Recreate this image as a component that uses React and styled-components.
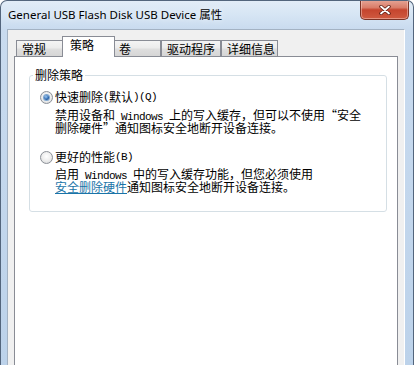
import React from "react";
import styled, { createGlobalStyle } from "styled-components";

const GlobalStyle = createGlobalStyle`
    html, body {
        margin: 0;
        padding: 0;
        background: #ffffff;
    }
    body {
        width: 414px;
        height: 365px;
        overflow: hidden;
        font-family: "Noto Sans CJK SC", "Noto Sans", sans-serif;
    }
`;

const Window = styled.div`
    width: 414px;
    height: 365px;
    box-sizing: border-box;
    border: 1px solid #53657c;
    border-bottom: none;
    border-radius: 7px 7px 0 0;
    background: linear-gradient(180deg, #e2ecf7 0, #d6e5f4 14px, #c9dbef 28px, #bcd2ea 100%);
    display: flex;
    flex-direction: column;
    overflow: hidden;
`;

const TitleBar = styled.div`
    height: 28px;
    flex: none;
    display: flex;
    align-items: flex-start;
    justify-content: space-between;
    padding: 0 4px 0 7px;
`;

const Title = styled.div`
    margin-top: 6px;
    font-family: "Noto Sans", "Noto Sans CJK SC", sans-serif;
    font-size: 11.5px;
    line-height: 16px;
    color: #000;
    text-shadow: 0 0 6px rgba(255, 255, 255, 0.9);
    white-space: nowrap;
`;

const CloseButton = styled.button`
    width: 49px;
    height: 20px;
    margin-top: -1px;
    padding: 0;
    box-sizing: border-box;
    border: 1px solid #7a3326;
    border-top: none;
    border-radius: 0 0 5px 5px;
    background: linear-gradient(180deg, #e6a697 0, #d97d69 40%, #c5452e 52%, #cf5a40 100%);
    box-shadow: inset 0 0 0 1px rgba(255, 220, 210, 0.45);
    display: flex;
    align-items: center;
    justify-content: center;
`;

const Client = styled.div`
    flex: 1;
    display: flex;
    flex-direction: column;
    margin: 0 8px 0 6px;
    padding: 6px 6px 0 6px;
    background: #f0f0f0;
    border-top: 1px solid #a3b2c3;
    border-left: 1px solid #a3b2c3;
    border-right: 1px solid #ffffff;
`;

const TabStrip = styled.div`
    height: 20px;
    flex: none;
    display: flex;
    align-items: flex-end;
    padding-left: 2px;
`;

const Tab = styled.div`
    position: relative;
    box-sizing: border-box;
    width: ${(p) => (p.$active ? p.$w + 4 : p.$w)}px;
    height: ${(p) => (p.$active ? 21 : 16)}px;
    margin: ${(p) => (p.$active ? "0 -2px -1px -2px" : "0")};
    padding-left: ${(p) => (p.$active ? 7 : 5)}px;
    padding-bottom: ${(p) => (p.$active ? 4 : 0)}px;
    display: flex;
    align-items: center;
    border: 1px solid #898c95;
    border-bottom: none;
    background: ${(p) =>
        p.$active
            ? "#ffffff"
            : "linear-gradient(180deg, #f4f4f4 0, #ececec 45%, #dedede 55%, #d6d6d6 100%)"};
    z-index: ${(p) => (p.$active ? 1 : 0)};
    font-size: 12px;
    line-height: 14px;
    color: #000;
    white-space: nowrap;
`;

const Panel = styled.div`
    flex: 1;
    background: #ffffff;
    border: 1px solid #898c95;
    border-bottom: none;
    padding: 11px 10px 0 14px;
`;

const GroupBox = styled.fieldset`
    margin: 0;
    min-width: 0;
    padding: 0 10px 18px 10px;
    border: 1px solid #d5dfe5;
    border-radius: 3px;
`;

const GroupTitle = styled.legend`
    margin-left: -7px;
    padding: 0 2px;
    font-size: 12px;
    line-height: 14px;
    color: #000;
`;

const Option = styled.div`
    margin-top: ${(p) => p.$top}px;
`;

const OptionRow = styled.label`
    display: flex;
    align-items: center;
    height: 14px;
    font-size: 12px;
    line-height: 14px;
    color: #000;
    white-space: nowrap;
`;

const Radio = styled.span`
    width: 13px;
    height: 13px;
    flex: none;
    box-sizing: border-box;
    margin-right: 2px;
    border-radius: 50%;
    border: 1px solid #8b9097;
    background: radial-gradient(circle at 50% 40%, #ffffff 0, #ececec 55%, #cfd1d4 100%);
    display: flex;
    align-items: center;
    justify-content: center;

    &::after {
        content: "";
        width: 5px;
        height: 5px;
        border-radius: 50%;
        background: ${(p) =>
            p.$checked
                ? "radial-gradient(circle at 40% 35%, #9cc8f2 0, #2a65ad 60%, #163d70 100%)"
                : "transparent"};
        box-shadow: ${(p) => (p.$checked ? "0 0 0 1px #7fa6cf" : "none")};
    }
`;

const Description = styled.div`
    margin-top: ${(p) => p.$top}px;
    padding-left: 15px;
    font-size: 12px;
    line-height: 13px;
    color: #000;
    white-space: nowrap;
`;

const Line = styled.div`
    height: 13px;
`;

const Half = styled.span`
    font-family: "Liberation Mono", monospace;
    font-size: 11px;
    letter-spacing: -0.6px;
    white-space: pre;
`;

const Link = styled.span`
    color: #1a74a8;
    text-decoration: underline;
`;

const tabs = [
    { label: "常规", w: 48 },
    { label: "策略", w: 49, active: true },
    { label: "卷", w: 48 },
    { label: "驱动程序", w: 60 },
    { label: "详细信息", w: 57 },
];

function CloseGlyph() {
    return (
        <svg width="12" height="10" viewBox="0 0 12 10">
            <path d="M2 1.5 L10 8.5 M10 1.5 L2 8.5" stroke="#5a1c12" strokeWidth="3.4" strokeLinecap="round" />
            <path d="M2 1.5 L10 8.5 M10 1.5 L2 8.5" stroke="#ffffff" strokeWidth="1.8" strokeLinecap="round" />
        </svg>
    );
}

export default function App() {
    return (
        <>
            <GlobalStyle />
            <Window>
                <TitleBar>
                    <Title>General USB Flash Disk USB Device 属性</Title>
                    <CloseButton aria-label="关闭">
                        <CloseGlyph />
                    </CloseButton>
                </TitleBar>
                <Client>
                    <TabStrip>
                        {tabs.map((t) => (
                            <Tab key={t.label} $w={t.w} $active={t.active}>
                                {t.label}
                            </Tab>
                        ))}
                    </TabStrip>
                    <Panel>
                        <GroupBox>
                            <GroupTitle>删除策略</GroupTitle>
                            <Option $top={8}>
                                <OptionRow>
                                    <Radio $checked />
                                    快速删除<Half>(</Half>默认<Half>)(Q)</Half>
                                </OptionRow>
                                <Description $top={4}>
                                    <Line>
                                        禁用设备和<Half> Windows </Half>上的写入缓存，但可以不使用“安全
                                    </Line>
                                    <Line>删除硬件”通知图标安全地断开设备连接。</Line>
                                </Description>
                            </Option>
                            <Option $top={16}>
                                <OptionRow>
                                    <Radio />
                                    更好的性能<Half>(B)</Half>
                                </OptionRow>
                                <Description $top={3}>
                                    <Line>
                                        启用<Half> Windows </Half>中的写入缓存功能，但您必须使用
                                    </Line>
                                    <Line>
                                        <Link>安全删除硬件</Link>通知图标安全地断开设备连接。
                                    </Line>
                                </Description>
                            </Option>
                        </GroupBox>
                    </Panel>
                </Client>
            </Window>
        </>
    );
}
